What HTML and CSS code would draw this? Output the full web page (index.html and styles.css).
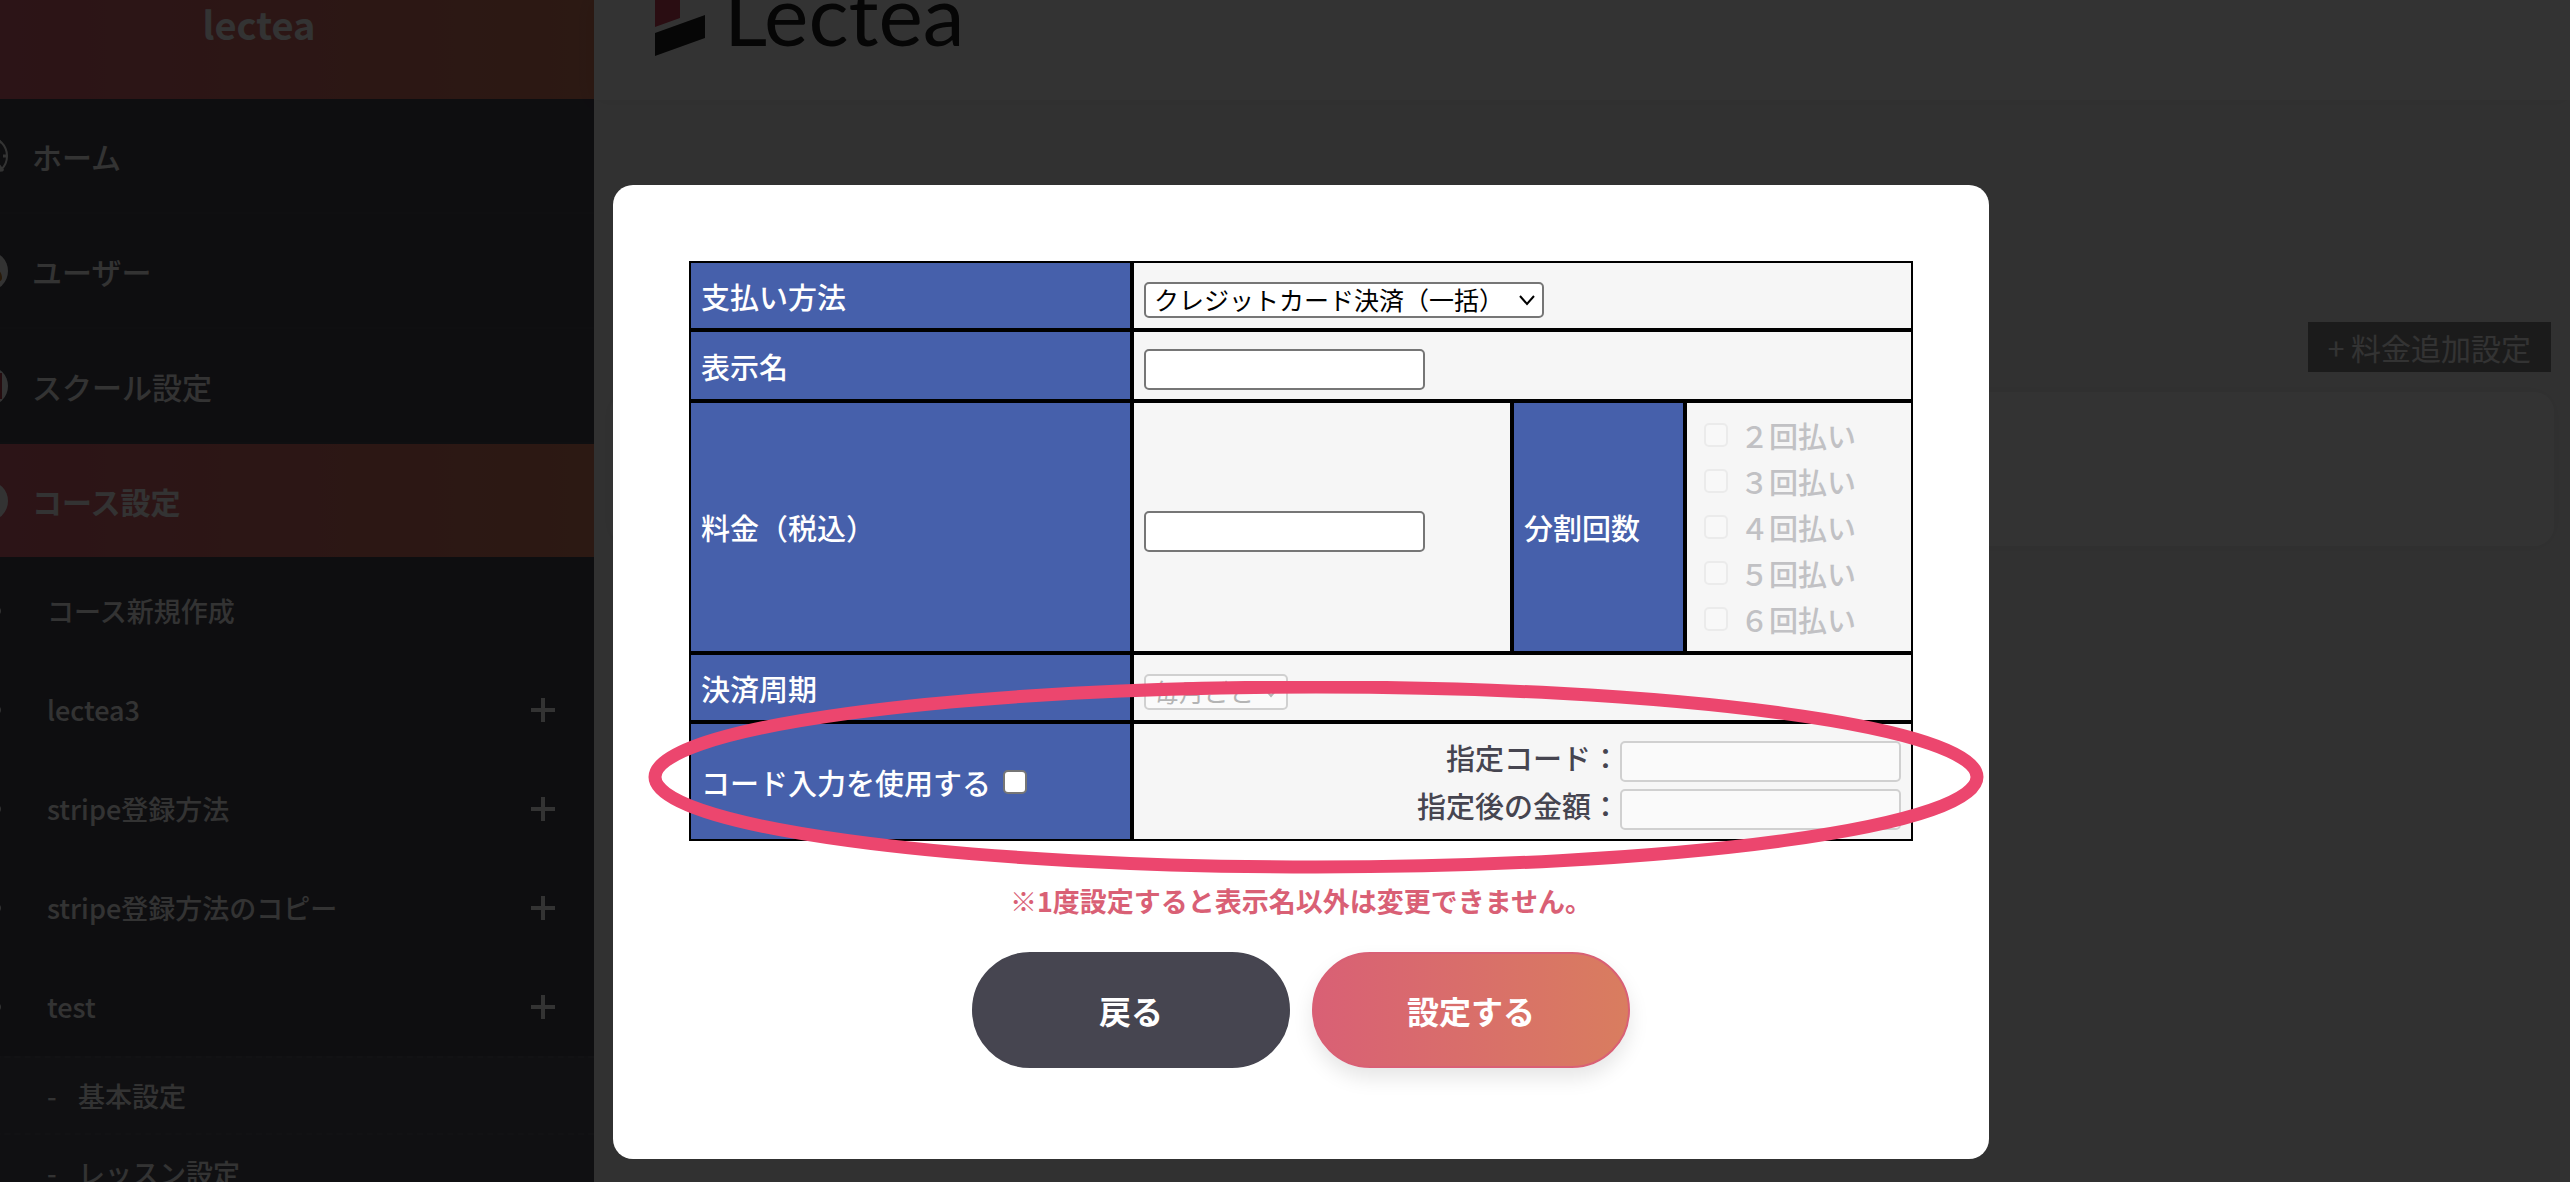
FILE: index.html
```html
<!DOCTYPE html>
<html lang="ja">

<head>
    <meta charset="UTF-8">
    <meta name="viewport" content="width=device-width, initial-scale=1.0">
    <title>lectea | コース設定</title>
    <link rel="stylesheet" href="styles.css">
</head>

<body>
    <div class="page">
        <aside class="sidebar">
            <div class="brand">lectea</div>
            <nav>
                <a class="menu-item" href="#">
                    <svg class="menu-icon" viewBox="0 0 40 40">
                        <circle cx="20" cy="20" r="19" fill="none" stroke="#fff" stroke-width="2" />
                        <path d="M29 8l4-3M35 20h4M29 27l6 8" fill="none" stroke="#fff" stroke-width="3" />
                    </svg>
                    ホーム
                </a>
                <a class="menu-item" href="#">
                    <svg class="menu-icon" viewBox="0 0 40 40">
                        <circle cx="20" cy="20" r="20" fill="#fff" />
                        <path d="M6 27c0-16 28-16 28 0 0 3-3 4-5 4H11c-2 0-5-1-5-4z" fill="#c88232" />
                    </svg>
                    ユーザー
                </a>
                <a class="menu-item" href="#">
                    <svg class="menu-icon" viewBox="0 0 40 40">
                        <circle cx="20" cy="20" r="20" fill="#fff" />
                        <path d="M7 7h27v26H7z" fill="#b43c4b" />
                    </svg>
                    スクール設定
                </a>
                <a class="menu-item active" href="#">
                    <svg class="menu-icon" viewBox="0 0 40 40">
                        <circle cx="20" cy="20" r="20" fill="#fff" />
                    </svg>
                    コース設定
                </a>
                <div class="sub-menu">
                    <a class="sub-item" href="#">コース新規作成</a>
                    <a class="sub-item more" href="#">lectea3</a>
                    <a class="sub-item more" href="#">stripe登録方法</a>
                    <a class="sub-item more" href="#">stripe登録方法のコピー</a>
                    <a class="sub-item more" href="#">test</a>
                </div>
                <div class="detail-menu">
                    <a class="detail-item" href="#"><span class="dash">-</span>基本設定</a>
                    <a class="detail-item" href="#"><span class="dash">-</span>レッスン設定</a>
                </div>
            </nav>
        </aside>

        <main class="content">
            <header class="header">
                <div class="logo">
                    <svg class="logo-mark" viewBox="0 0 50 76">
                        <path d="M0 9L25 0V38L0 47z" fill="#d2405a" />
                        <path d="M0 53L50 35V58L0 76z" fill="#222" />
                    </svg>
                    <span>Lectea</span>
                </div>
            </header>
            <div class="toolbar">
                <button class="add-button" type="button">+ 料金追加設定</button>
            </div>
            <section class="card"></section>
        </main>
    </div>

    <div class="overlay">
        <form class="modal">
            <table class="price-table">
                <colgroup>
                    <col class="col-name">
                    <col class="col-value">
                    <col class="col-split">
                    <col class="col-times">
                </colgroup>
                <tr class="row-method">
                    <th><label for="method">支払い方法</label></th>
                    <td colspan="3">
                        <select id="method" class="method">
                            <option>クレジットカード決済（一括）</option>
                        </select>
                    </td>
                </tr>
                <tr class="row-label">
                    <th><label for="label">表示名</label></th>
                    <td colspan="3"><input type="text" id="label"></td>
                </tr>
                <tr class="row-price">
                    <th><label for="price">料金（税込）</label></th>
                    <td><input type="text" id="price"></td>
                    <th>分割回数</th>
                    <td class="times">
                        <label><input type="checkbox" disabled>２回払い</label>
                        <label><input type="checkbox" disabled>３回払い</label>
                        <label><input type="checkbox" disabled>４回払い</label>
                        <label><input type="checkbox" disabled>５回払い</label>
                        <label><input type="checkbox" disabled>６回払い</label>
                    </td>
                </tr>
                <tr class="row-method">
                    <th><label for="cycle">決済周期</label></th>
                    <td colspan="3">
                        <select id="cycle" class="cycle" disabled>
                            <option>毎月ごと</option>
                        </select>
                    </td>
                </tr>
                <tr class="row-code">
                    <th><label class="use-code">コード入力を使用する<input type="checkbox"></label></th>
                    <td colspan="3">
                        <div class="codes">
                            <label for="code">指定コード：</label>
                            <input type="text" id="code" disabled>
                            <label for="code-price">指定後の金額：</label>
                            <input type="text" id="code-price" disabled>
                        </div>
                    </td>
                </tr>
            </table>
            <p class="notice">※1度設定すると表示名以外は変更できません。</p>
            <div class="buttons">
                <button class="back" type="button">戻る</button>
                <button class="submit" type="button">設定する</button>
            </div>
            <!-- highlight around the code row -->
            <svg class="highlight" viewBox="0 0 1336 193" preserveAspectRatio="none">
                <ellipse cx="668" cy="96" rx="661" ry="90" fill="none" stroke="#ec466e" stroke-width="13" />
            </svg>
        </form>
    </div>
</body>

</html>
```
FILE: styles.css
```css
* {
    box-sizing: border-box;
}

body {
    margin: 0;
    height: 100vh;
    overflow: hidden;
    font-family: "Noto Sans CJK JP", "Noto Sans", sans-serif;
    color: #464550;
    background-color: #f5f5f5;
}

button,
input,
select {
    font-family: inherit;
}

.page {
    display: flex;
    height: 100vh;
    overflow: hidden;
}

/* sidebar */
.sidebar {
    flex: none;
    width: 670px;
    margin-left: -76px;
    background-color: #464550;
    color: white;
}

.brand {
    height: 99px;
    font-size: 38px;
    font-weight: bold;
    line-height: 48px;
    text-align: center;
    background: linear-gradient(90deg, #d96075, #d97d5f);
}

.menu-item {
    display: flex;
    align-items: center;
    gap: 24px;
    height: 115px;
    padding-left: 44px;
    border-bottom: 2px solid #4b4a55;
    font-size: 30px;
    font-weight: 500;
    line-height: 40px;
    color: white;
    text-decoration: none;
}

.menu-item.active {
    height: 113px;
    border-bottom: 0;
    font-weight: bold;
    background: linear-gradient(90deg, #d96075, #d97d5f);
}

.menu-icon {
    width: 40px;
    height: 40px;
}

.sub-menu {
    padding-top: 4px;
}

.sub-item {
    display: flex;
    align-items: center;
    gap: 46px;
    height: 99px;
    padding: 0 39px 0 67px;
    font-size: 27px;
    font-weight: 500;
    color: white;
    text-decoration: none;
}

.sub-item::before {
    content: "";
    width: 10px;
    height: 10px;
    border-radius: 50%;
    background-color: white;
}

.sub-item.more::after {
    content: "";
    width: 24px;
    height: 24px;
    margin-left: auto;
    background:
        linear-gradient(white, white) center / 24px 4px no-repeat,
        linear-gradient(white, white) center / 4px 24px no-repeat;
}

.detail-menu {
    background-color: #50505a;
}

.detail-item {
    display: flex;
    align-items: center;
    height: 77px;
    padding-left: 123px;
    border-top: 2px dashed #5a5a64;
    font-size: 27px;
    font-weight: 500;
    color: white;
    text-decoration: none;
}

.dash {
    width: 31px;
}

/* main area */
.content {
    flex: 1;
}

.header {
    height: 100px;
    padding-left: 61px;
    overflow: hidden;
    background-color: white;
    box-shadow: 0 0 20px rgba(0, 0, 0, 0.05);
}

.logo {
    display: flex;
    align-items: flex-start;
    gap: 19px;
    margin-top: -20px;
    font-family: Lato, sans-serif;
    font-size: 84px;
    line-height: 68px;
    color: #222;
}

.logo-mark {
    width: 50px;
    height: 76px;
}

.toolbar {
    display: flex;
    justify-content: flex-end;
    padding: 222px 19px 20px;
}

.add-button {
    height: 50px;
    padding: 0 20px;
    border: 0;
    font-size: 30px;
    line-height: 50px;
    color: white;
    background-color: #878787;
}

.card {
    height: 154px;
    margin: 0 16px;
    border-radius: 20px;
    background-color: white;
    box-shadow: 0 0 20px rgba(0, 0, 0, 0.05);
}

/* modal */
.overlay {
    position: fixed;
    inset: 0;
    padding: 185px 0 0 32px;
    background-color: rgba(0, 0, 0, 0.8);
}

.modal {
    position: relative;
    width: 1376px;
    max-width: 100%;
    margin: 0 auto;
    padding: 76px 76px 91px;
    border-radius: 20px;
    background-color: white;
}

.price-table {
    width: 100%;
    table-layout: fixed;
    border-spacing: 0;
    font-size: 29px;
    font-weight: 500;
    line-height: 40px;
}

.col-name {
    width: 443px;
}

.col-split {
    width: 173px;
}

.col-times {
    width: 228px;
}

.price-table th,
.price-table td {
    border: 2px solid black;
}

.price-table th {
    padding: 0 10px;
    font-weight: 500;
    text-align: left;
    color: white;
    background-color: #4660ab;
}

.price-table td {
    padding: 8px 10px 0;
    background-color: #f6f6f6;
}

.row-method {
    height: 69px;
}

.row-label {
    height: 71px;
}

.row-price {
    height: 252px;
}

.row-code {
    height: 119px;
}

input[type="text"] {
    display: block;
    width: 281px;
    height: 41px;
    padding: 2px 4px;
    border: 2px solid #767676;
    border-radius: 5px;
    font-size: 25px;
    background-color: white;
}

input[type="text"]:disabled {
    border-color: #d0d0d0;
    background-color: #fafafa;
}

input[type="checkbox"] {
    appearance: none;
    width: 24px;
    height: 24px;
    margin: 0;
    border: 2px solid #767676;
    border-radius: 5px;
    background-color: white;
}

input[type="checkbox"]:disabled {
    border-color: #ebebeb;
    background-color: #f8f8f8;
}

select {
    display: block;
    height: 36px;
    padding: 0 8px 2px;
    appearance: none;
    border: 2px solid #767676;
    border-radius: 5px;
    font-size: 25px;
    line-height: 30px;
    color: black;
    background: white url("data:image/svg+xml,%3Csvg xmlns='http://www.w3.org/2000/svg' viewBox='0 0 18 12'%3E%3Cpath d='M2 2l7 8 7-8' fill='none' stroke='black' stroke-width='2'/%3E%3C/svg%3E") right 6px center / 18px 12px no-repeat;
}

select:disabled {
    color: #b4b4b4;
    border-color: #d0d0d0;
    background-color: #fafafa;
    background-image: url("data:image/svg+xml,%3Csvg xmlns='http://www.w3.org/2000/svg' viewBox='0 0 18 12'%3E%3Cpath d='M2 2l7 8 7-8' fill='none' stroke='%23b4b4b4' stroke-width='2'/%3E%3C/svg%3E");
    opacity: 1;
}

.method {
    width: 400px;
}

.cycle {
    width: 144px;
}

.price-table .times {
    padding: 0 0 0 17px;
    color: #c1c1c4;
}

.times label {
    display: flex;
    align-items: center;
    gap: 12px;
    height: 46px;
}

.use-code {
    display: flex;
    align-items: center;
    gap: 12px;
}

.codes {
    display: grid;
    grid-template-columns: auto auto;
    justify-content: end;
    row-gap: 7px;
    line-height: 32px;
    text-align: right;
}

.notice {
    margin: 40px 0 31px;
    font-size: 27px;
    font-weight: bold;
    line-height: 40px;
    text-align: center;
    color: #d96075;
}

.buttons {
    display: flex;
    justify-content: center;
    gap: 22px;
}

.buttons button {
    width: 318px;
    height: 116px;
    border: 2px solid #464550;
    border-radius: 58px;
    font-size: 32px;
    font-weight: bold;
    color: white;
    background-color: #464550;
}

.buttons .submit {
    border-color: #d96075;
    background: linear-gradient(90deg, #d96075, #d97d5f);
    box-shadow: 0 10px 20px rgba(0, 0, 0, 0.1);
}

.highlight {
    position: absolute;
    top: 496px;
    left: 35px;
    width: 1336px;
    height: 193px;
    pointer-events: none;
}
```
